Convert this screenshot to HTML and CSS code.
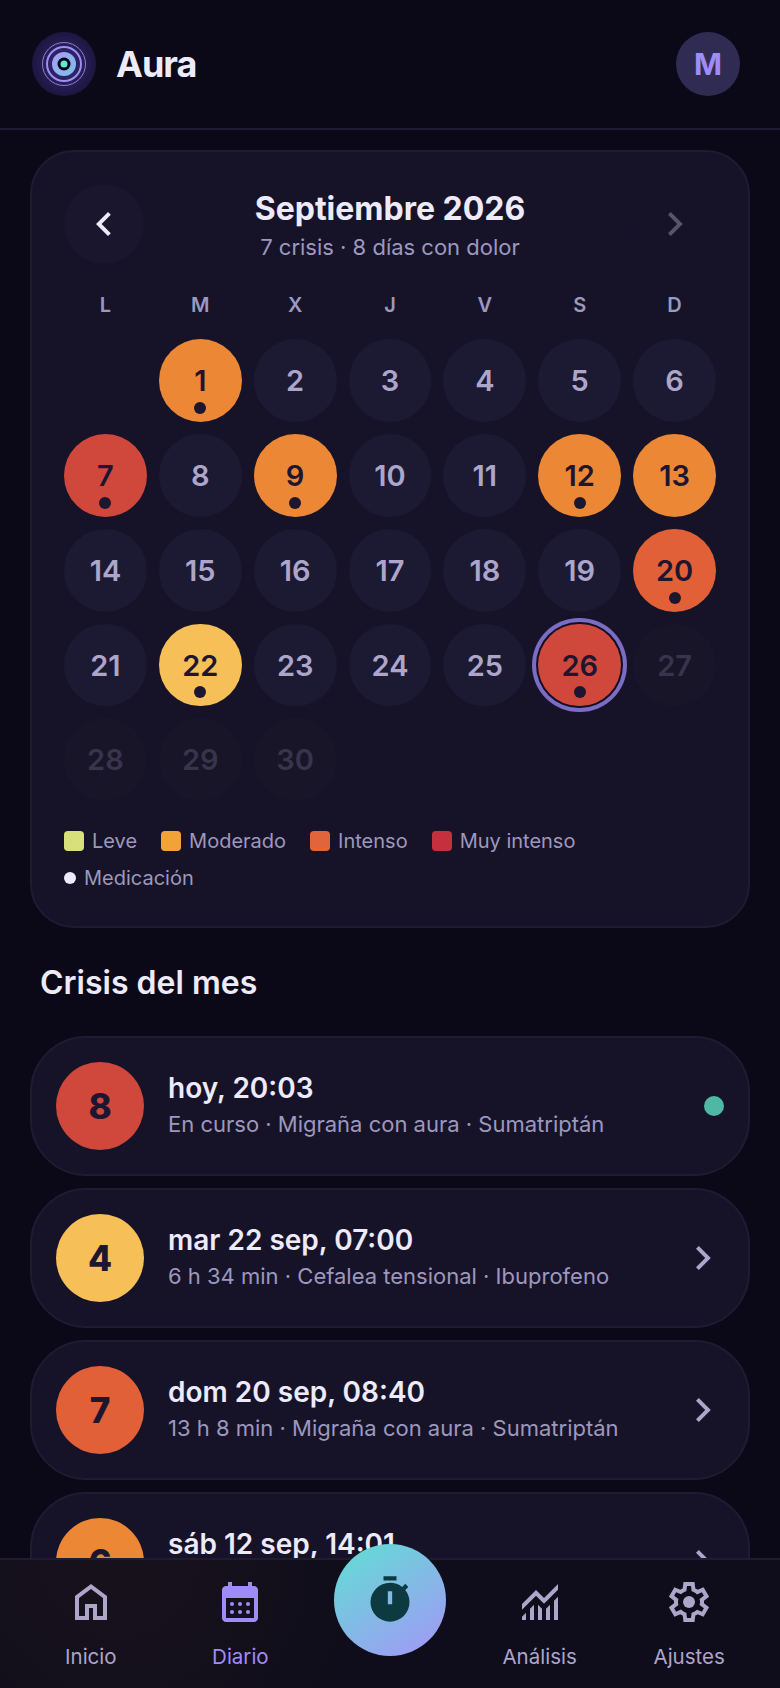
FILE: index.html
```html
<!DOCTYPE html>
<html lang="es">
<head>
  <meta charset="UTF-8" />
  <meta name="viewport" content="width=device-width, initial-scale=1.0"/>
  <title>Aura | Diario</title>
  <link rel="stylesheet" href="styles.css">
</head>
<body>

<div class="app">
  <header class="topbar">
    <div class="brand">
      <svg class="logo" viewBox="0 0 64 64">
        <defs>
          <radialGradient id="logo-bg">
            <stop offset="0" stop-color="#3a2c7c"/>
            <stop offset="1" stop-color="#1c1640"/>
          </radialGradient>
          <linearGradient id="logo-core" x1="0" y1="0" x2="1" y2="1">
            <stop offset="0" stop-color="#a99cf5"/>
            <stop offset="1" stop-color="#79c2ee"/>
          </linearGradient>
        </defs>
        <circle cx="32" cy="32" r="32" fill="url(#logo-bg)"/>
        <circle cx="32" cy="32" r="21.5" fill="none" stroke="#8d80cc" stroke-width="1"/>
        <circle cx="32" cy="32" r="17" fill="none" stroke="#9d8ff0" stroke-width="2"/>
        <circle cx="32" cy="32" r="12" fill="url(#logo-core)"/>
        <circle cx="32" cy="32" r="6.5" fill="#06060e"/>
        <circle cx="32" cy="32" r="3.5" fill="#5fe8d8"/>
      </svg>
      <h1>Aura</h1>
    </div>
    <div class="avatar">M</div>
  </header>

  <main class="content">
    <section class="calendar">
      <div class="cal-head">
        <button class="cal-nav">
          <svg viewBox="0 0 24 24"><path d="M15.4 7.4 14 6l-6 6 6 6 1.4-1.4-4.6-4.6z"/></svg>
        </button>
        <div class="cal-title">
          <h2>Septiembre 2026</h2>
          <p>7 crisis · 8 días con dolor</p>
        </div>
        <button class="cal-nav disabled">
          <svg viewBox="0 0 24 24"><path d="M12.6 12 8 7.4 9.4 6l6 6-6 6L8 16.6z"/></svg>
        </button>
      </div>

      <div class="weekdays">
        <span>L</span><span>M</span><span>X</span><span>J</span><span>V</span><span>S</span><span>D</span>
      </div>

      <div class="days">
        <div class="day blank"></div>
        <div class="day moderate med">1</div>
        <div class="day">2</div>
        <div class="day">3</div>
        <div class="day">4</div>
        <div class="day">5</div>
        <div class="day">6</div>
        <div class="day severe med">7</div>
        <div class="day">8</div>
        <div class="day moderate med">9</div>
        <div class="day">10</div>
        <div class="day">11</div>
        <div class="day moderate med">12</div>
        <div class="day moderate">13</div>
        <div class="day">14</div>
        <div class="day">15</div>
        <div class="day">16</div>
        <div class="day">17</div>
        <div class="day">18</div>
        <div class="day">19</div>
        <div class="day intense med">20</div>
        <div class="day">21</div>
        <div class="day mild med">22</div>
        <div class="day">23</div>
        <div class="day">24</div>
        <div class="day">25</div>
        <div class="day severe med today">26</div>
        <div class="day future">27</div>
        <div class="day future">28</div>
        <div class="day future">29</div>
        <div class="day future">30</div>
      </div>

      <div class="legend">
        <div class="legend-item"><i class="swatch lime"></i>Leve</div>
        <div class="legend-item"><i class="swatch amber"></i>Moderado</div>
        <div class="legend-item"><i class="swatch coral"></i>Intenso</div>
        <div class="legend-item"><i class="swatch crimson"></i>Muy intenso</div>
        <div class="legend-item"><i class="legend-dot"></i>Medicación</div>
      </div>
    </section>

    <h2 class="section-title">Crisis del mes</h2>

    <div class="crisis-list">
      <div class="crisis">
        <div class="score severe">8</div>
        <div class="crisis-text">
          <h3>hoy, 20:03</h3>
          <p>En curso · Migraña con aura · Sumatriptán</p>
        </div>
        <span class="live-dot"></span>
      </div>
      <div class="crisis">
        <div class="score mild">4</div>
        <div class="crisis-text">
          <h3>mar 22 sep, 07:00</h3>
          <p>6 h 34 min · Cefalea tensional · Ibuprofeno</p>
        </div>
        <svg class="chevron" viewBox="0 0 24 24"><path d="M12.6 12 8 7.4 9.4 6l6 6-6 6L8 16.6z"/></svg>
      </div>
      <div class="crisis">
        <div class="score intense">7</div>
        <div class="crisis-text">
          <h3>dom 20 sep, 08:40</h3>
          <p>13 h 8 min · Migraña con aura · Sumatriptán</p>
        </div>
        <svg class="chevron" viewBox="0 0 24 24"><path d="M12.6 12 8 7.4 9.4 6l6 6-6 6L8 16.6z"/></svg>
      </div>
      <div class="crisis">
        <div class="score moderate">6</div>
        <div class="crisis-text">
          <h3>sáb 12 sep, 14:01</h3>
          <p>&nbsp;</p>
        </div>
        <svg class="chevron" viewBox="0 0 24 24"><path d="M12.6 12 8 7.4 9.4 6l6 6-6 6L8 16.6z"/></svg>
      </div>
    </div>
  </main>

  <nav class="tabbar">
    <a class="tab">
      <svg viewBox="0 0 24 24"><path d="M6 19h3v-6h6v6h3v-9l-6-4.5L6 10v9zm-2 2V9l8-6 8 6v12h-7v-6h-2v6H4z"/></svg>
      <span>Inicio</span>
    </a>
    <a class="tab active">
      <svg viewBox="0 0 24 24">
        <path fill-rule="evenodd" d="M5 22q-.825 0-1.413-.588T3 20V6q0-.825.588-1.413T5 4h1V2h2v2h8V2h2v2h1q.825 0 1.413.588T21 6v14q0 .825-.588 1.413T19 22H5zm0-2h14V10H5v10z"/>
        <circle cx="8" cy="13" r="1"/><circle cx="12" cy="13" r="1"/><circle cx="16" cy="13" r="1"/>
        <circle cx="8" cy="17" r="1"/><circle cx="12" cy="17" r="1"/><circle cx="16" cy="17" r="1"/>
      </svg>
      <span>Diario</span>
    </a>
    <div class="tab-gap"></div>
    <a class="tab">
      <svg viewBox="0 0 24 24"><path d="M3 21v-1.65l2-2V21H3zm4 0v-5.65l2-2V21H7zm4 0v-7.65l2 2.03V21h-2zm4 0v-5.62l2-2V21h-2zm4 0V11.35l2-2V21h-2zM3 15.83V13l7-7 4 4 7-7v2.83l-7 7-4-4-7 7z"/></svg>
      <span>Análisis</span>
    </a>
    <a class="tab">
      <svg viewBox="0 0 24 24">
        <path d="m9.25 22-.4-3.2q-.325-.125-.613-.3-.287-.175-.562-.375L4.7 19.375l-2.75-4.75 2.575-1.95Q4.5 12.5 4.5 12.337v-.675q0-.162.025-.337L1.95 9.375l2.75-4.75 2.975 1.25q.275-.2.575-.375.3-.175.6-.3l.4-3.2h5.5l.4 3.2q.325.125.613.3.287.175.562.375l2.975-1.25 2.75 4.75-2.575 1.95q.025.175.025.337v.675q0 .163-.05.338l2.575 1.95-2.75 4.75-2.95-1.25q-.275.2-.575.375-.3.175-.6.3l-.4 3.2h-5.5zm1.75-2h1.975l.35-2.65q.775-.2 1.438-.588.662-.387 1.212-.937l2.475 1.025.975-1.7-2.15-1.625q.125-.35.175-.737.05-.388.05-.788t-.05-.788q-.05-.387-.175-.737l2.15-1.625-.975-1.7-2.475 1.05q-.55-.575-1.212-.963-.663-.387-1.438-.587L13 4h-1.975l-.35 2.65q-.775.2-1.437.587-.663.388-1.213.938L5.55 7.15l-.975 1.7 2.15 1.6q-.125.375-.175.75-.05.375-.05.8 0 .4.05.775t.175.75l-2.15 1.625.975 1.7 2.475-1.05q.55.575 1.213.962.662.388 1.437.588L11 20z"/>
        <circle cx="12" cy="12" r="3"/>
      </svg>
      <span>Ajustes</span>
    </a>
    <button class="fab">
      <svg viewBox="0 0 24 24"><path d="M9 3V1h6v2H9zm2 11h2V8h-2v6zm1 8q-1.85 0-3.488-.712Q6.875 20.575 5.65 19.35t-1.938-2.863Q3 14.85 3 13t.712-3.488Q4.425 7.875 5.65 6.65t2.862-1.938Q10.15 4 12 4q1.55 0 2.975.5t2.675 1.45l1.4-1.4 1.4 1.4-1.4 1.4q.95 1.25 1.45 2.675T21 13q0 1.85-.712 3.488Q19.575 18.125 18.35 19.35t-2.863 1.938Q13.85 22 12 22z"/></svg>
    </button>
  </nav>
</div>

</body>
</html>
```

FILE: styles.css
```css
:root {
  --bg: #0b0917;
  --surface: #161329;
  --border: #1e1b32;
  --cell: #1c1932;
  --text: #edeafa;
  --text-muted: #9d98bd;
  --text-soft: #aca6cb;
  --accent: #a08cf8;
  --ink: #1d1630;
  --mild: #f6bf58;
  --moderate: #ec8735;
  --intense: #e16038;
  --severe: #d0483b;
}

* {
  margin: 0;
  padding: 0;
  box-sizing: border-box;
}

html, body {
  font-family: 'Inter', sans-serif;
  background: var(--bg);
  color: var(--text);
  height: 100%;
  width: 100%;
  overflow: hidden;
}

.app {
  display: flex;
  flex-direction: column;
  height: 100vh;
}

/* top bar */
.topbar {
  display: flex;
  flex: none;
  justify-content: space-between;
  align-items: center;
  height: 130px;
  padding: 0 40px 0 32px;
  border-bottom: 2px solid var(--border);
}

.brand {
  display: flex;
  align-items: center;
  gap: 20px;
}

.logo {
  width: 64px;
  height: 64px;
}

.brand h1 {
  font-size: 36px;
  font-weight: 700;
  letter-spacing: -1px;
}

.avatar {
  display: flex;
  justify-content: center;
  align-items: center;
  width: 64px;
  height: 64px;
  border-radius: 50%;
  background: #302b52;
  color: var(--accent);
  font-size: 30px;
  font-weight: 700;
}

.content {
  flex: 1;
  min-height: 0;
  overflow: hidden;
  padding: 20px 30px 0;
}

/* calendar card */
.calendar {
  padding: 32px 32px 34px;
  background: var(--surface);
  border: 2px solid var(--border);
  border-radius: 44px;
}

.cal-head {
  display: flex;
  justify-content: space-between;
  align-items: flex-start;
}

.cal-nav {
  display: flex;
  justify-content: center;
  align-items: center;
  width: 80px;
  height: 80px;
  border: 0;
  border-radius: 50%;
  background: #19162d;
}

.cal-nav svg {
  width: 48px;
  height: 48px;
  fill: var(--text);
}

.cal-nav.disabled {
  opacity: 0.3;
  background: #17142c;
}

.cal-title {
  padding-top: 5px;
  text-align: center;
}

.cal-title h2 {
  font-size: 32px;
  line-height: 40px;
  font-weight: 700;
}

.cal-title p {
  margin-top: 3px;
  font-size: 22px;
  line-height: 30px;
  color: var(--text-muted);
}

.weekdays,
.days {
  display: grid;
  grid-template-columns: repeat(7, 1fr);
  column-gap: 12px;
}

.weekdays {
  margin-top: 27px;
  margin-bottom: 20px;
  font-size: 20px;
  line-height: 28px;
  font-weight: 600;
  color: var(--text-muted);
  text-align: center;
}

.days {
  row-gap: 12px;
}

.day {
  position: relative;
  display: flex;
  justify-content: center;
  align-items: center;
  aspect-ratio: 1;
  border-radius: 50%;
  background: var(--cell);
  color: var(--text-soft);
  font-size: 29px;
  font-weight: 600;
}

.day.blank {
  background: none;
}

.day.future {
  background: #181529;
  color: #37344c;
}

.day.mild { background: var(--mild); color: var(--ink); }
.day.moderate { background: var(--moderate); color: var(--ink); }
.day.intense { background: var(--intense); color: var(--ink); }
.day.severe { background: var(--severe); color: var(--ink); }

.day.med::after {
  content: "";
  position: absolute;
  bottom: 8px;
  left: 50%;
  width: 12px;
  height: 12px;
  margin-left: -6px;
  border-radius: 50%;
  background: var(--ink);
}

.day.today {
  box-shadow: 0 0 0 2px #120f22, 0 0 0 6px #7b6cc4;
}

.legend {
  display: flex;
  flex-wrap: wrap;
  gap: 9px 24px;
  margin-top: 26px;
  font-size: 20px;
  line-height: 28px;
  color: var(--text-muted);
}

.legend-item {
  display: flex;
  align-items: center;
  gap: 8px;
}

.swatch {
  width: 20px;
  height: 20px;
  border-radius: 4px;
}

.swatch.lime { background: #d8e07c; }
.swatch.amber { background: #f2a338; }
.swatch.coral { background: #e2643a; }
.swatch.crimson { background: #c5303f; }

.legend-dot {
  width: 12px;
  height: 12px;
  border-radius: 50%;
  background: var(--text);
}

/* crisis list */
.section-title {
  margin: 35px 0 33px 10px;
  font-size: 32px;
  line-height: 40px;
  font-weight: 600;
}

.crisis-list {
  display: flex;
  flex-direction: column;
  gap: 12px;
}

.crisis {
  display: flex;
  flex: none;
  align-items: center;
  gap: 24px;
  padding: 24px;
  background: var(--surface);
  border: 2px solid var(--border);
  border-radius: 56px;
}

.score {
  display: flex;
  flex: none;
  justify-content: center;
  align-items: center;
  width: 88px;
  height: 88px;
  border-radius: 50%;
  color: var(--ink);
  font-size: 35px;
  font-weight: 800;
}

.score.mild { background: var(--mild); }
.score.moderate { background: var(--moderate); }
.score.intense { background: var(--intense); }
.score.severe { background: var(--severe); }

.crisis-text {
  flex: 1;
  min-width: 0;
  padding-bottom: 3px;
}

.crisis-text h3 {
  font-size: 28px;
  line-height: 36px;
  font-weight: 600;
}

.crisis-text p {
  margin-top: 3px;
  font-size: 22px;
  line-height: 30px;
  color: var(--text-muted);
}

.live-dot {
  flex: none;
  width: 20px;
  height: 20px;
  border-radius: 50%;
  background: #4fb8a5;
}

.chevron {
  flex: none;
  width: 48px;
  height: 48px;
  margin-right: -4px;
  fill: var(--text-soft);
}

/* bottom nav */
.tabbar {
  position: relative;
  display: grid;
  flex: none;
  grid-template-columns: repeat(5, 1fr);
  height: 130px;
  padding: 18px 16px 0;
  border-top: 2px solid var(--border);
  background:
    radial-gradient(circle at 120px 0, rgba(236, 135, 53, 0.04), transparent 260px),
    #0f0d1b;
}

.tab {
  display: flex;
  flex-direction: column;
  align-items: center;
  color: var(--text-soft);
  font-size: 20.5px;
  line-height: 28px;
}

.tab svg {
  width: 48px;
  height: 48px;
  margin-bottom: 17px;
  fill: currentColor;
}

.tab.active {
  color: var(--accent);
}

.fab {
  position: absolute;
  top: -16px;
  left: 50%;
  display: flex;
  justify-content: center;
  align-items: center;
  width: 112px;
  height: 112px;
  margin-left: -56px;
  border: 0;
  border-radius: 50%;
  background: linear-gradient(145deg, #5fe0d2, #a595f8);
}

.fab svg {
  width: 52px;
  height: 52px;
  fill: #0c3a40;
}
```
